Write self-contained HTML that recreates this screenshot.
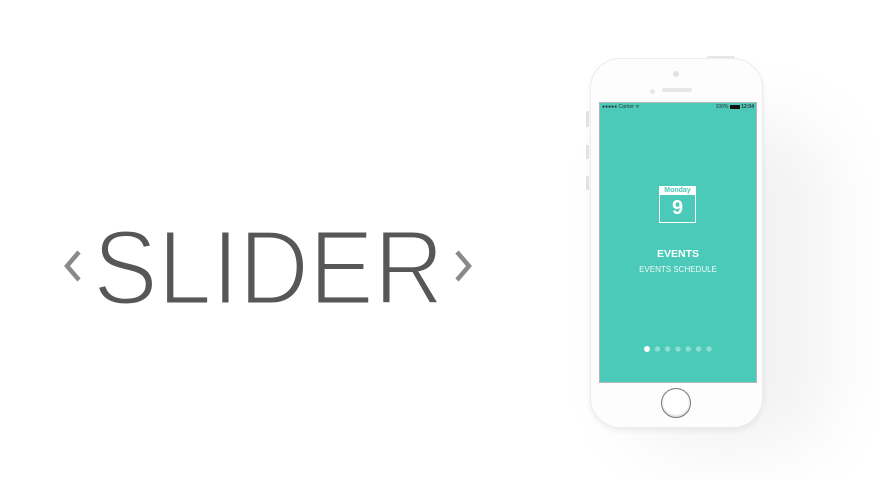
<!DOCTYPE html>
<html><head><style>
html,body{margin:0;padding:0;width:877px;height:480px;overflow:hidden;background:#fff;font-family:"Liberation Sans",sans-serif}
.abs{position:absolute}
.shadow{left:630px;top:120px;width:200px;height:330px;border-radius:60px;background:rgba(0,0,0,0.05);filter:blur(35px)}
.phone{left:590px;top:58px;width:173px;height:370px;background:#fdfdfd;border-radius:30px;border:1px solid #ececec;box-sizing:border-box;box-shadow:0 3px 6px rgba(0,0,0,0.06)}
.screen{left:599px;top:102px;width:158px;height:281px;background:#4bc9b9;border:1px solid #b5b5b5;box-sizing:border-box}
.btn{background:#e4e4e4;width:3px;border-radius:1px}
</style></head><body>
<div class="abs shadow"></div>
<div class="abs btn" style="left:586px;top:111px;height:16px"></div>
<div class="abs btn" style="left:586px;top:145px;height:14px"></div>
<div class="abs btn" style="left:586px;top:176px;height:14px"></div>
<div class="abs" style="left:707px;top:56px;width:28px;height:3px;background:#e6e6e6;border-radius:2px"></div>
<div class="abs phone"></div>
<div class="abs" style="left:673px;top:71px;width:6px;height:6px;border-radius:50%;background:#e2e2e2"></div>
<div class="abs" style="left:650px;top:89px;width:5px;height:5px;border-radius:50%;background:#e8e8e8"></div>
<div class="abs" style="left:662px;top:88px;width:30px;height:4px;border-radius:2px;background:#e6e6e6"></div>
<div class="abs screen"></div>
<div class="abs" style="left:602px;top:104px;font-size:5px;color:#333;width:152px">
<span>●●●●● Carrier ᯤ</span><span style="position:absolute;right:0;top:0">100% <span style="display:inline-block;width:10px;height:4px;background:#111;vertical-align:middle"></span> <b>12:04</b></span></div>
<div class="abs" style="left:659px;top:186px;width:37px;height:37px;border:1.5px solid #fff;box-sizing:border-box"></div>
<div class="abs" style="left:659px;top:186px;width:37px;height:9px;background:#fff;color:#4bc9b9;font-size:7px;font-weight:bold;text-align:center;line-height:9px">Monday</div>
<div class="abs" style="left:659px;top:196px;width:37px;text-align:center;color:#fff;font-size:20px;font-weight:bold;line-height:25px">9</div>
<div class="abs" style="left:600px;top:248px;width:156px;text-align:center;color:#fff;font-size:10.5px;font-weight:bold">EVENTS</div>
<div class="abs" style="left:600px;top:265px;width:156px;text-align:center;color:#eefaf8;font-size:8px">EVENTS SCHEDULE</div>
<svg class="abs" style="left:640px;top:343px" width="80" height="12">
<circle cx="7" cy="6" r="3" fill="#fff"/>
<circle cx="17.5" cy="6" r="2.7" fill="#8fded3"/><circle cx="27.7" cy="6" r="2.7" fill="#8fded3"/><circle cx="38" cy="6" r="2.7" fill="#8fded3"/><circle cx="48.3" cy="6" r="2.7" fill="#8fded3"/><circle cx="58.6" cy="6" r="2.7" fill="#8fded3"/><circle cx="69" cy="6" r="2.7" fill="#8fded3"/>
</svg>
<div class="abs" style="left:661px;top:388px;width:30px;height:30px;border-radius:50%;border:1.5px solid #777;box-sizing:border-box;background:#fff;box-shadow:inset 0 -1px 2px rgba(0,0,0,0.2)"></div>
<svg class="abs" style="left:0;top:0" width="580" height="480">
<polyline points="79,252 67,266 79,280" fill="none" stroke="#8a8a8a" stroke-width="4.5"/>
<polyline points="457,252 469,266 457,280" fill="none" stroke="#8a8a8a" stroke-width="4.5"/>
<text x="93" y="304" font-family="Liberation Sans, sans-serif" font-size="106" fill="#575757" stroke="#fff" stroke-width="3" textLength="351" lengthAdjust="spacingAndGlyphs">SLIDER</text>
</svg>
</body></html>
